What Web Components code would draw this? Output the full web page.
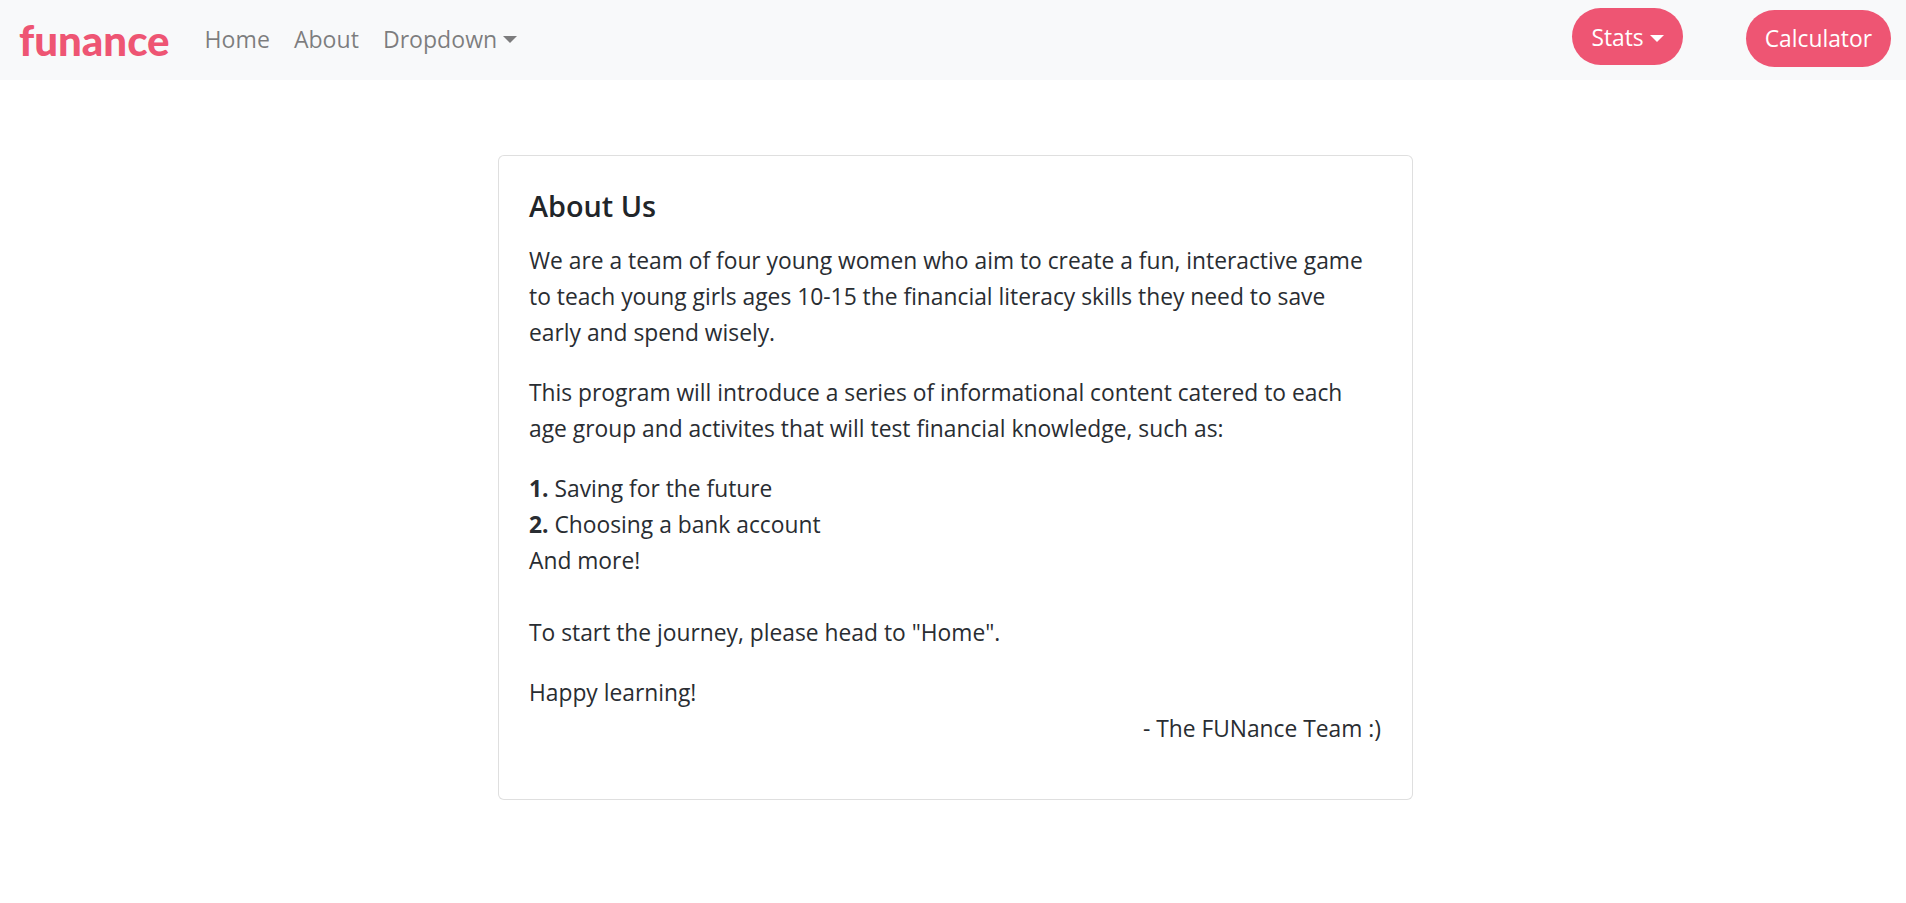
<!DOCTYPE html>
<html lang="en">
<head>
<meta charset="utf-8">
<title>funance</title>
<style>
    html, body { margin: 0; padding: 0; background: #fff; }
    body { font: 22.8px/36px 'Open Sans', 'Noto Sans', sans-serif; color: #292d32; }
</style>
</head>
<body>
<fn-navbar>
    <fn-brand slot="brand">funance</fn-brand>
    <fn-nav-link>Home</fn-nav-link>
    <fn-nav-link>About</fn-nav-link>
    <fn-nav-link caret>Dropdown</fn-nav-link>
    <fn-pill slot="right" caret style="margin-top:8px;padding-top:3px">Stats</fn-pill>
    <fn-pill slot="right" style="margin-top:10px">Calculator</fn-pill>
</fn-navbar>
<fn-card heading="About Us">
    <p>We are a team of four young women who aim to create a fun, interactive game to teach young girls ages 10-15 the financial literacy skills they need to save early and spend wisely.</p>
    <p>This program will introduce a series of informational content catered to each age group and activites that will test financial knowledge, such as:</p>
    <p><b>1.</b> Saving for the future<br><b>2.</b> Choosing a bank account<br>And more!<br><br>To start the journey, please head to "Home".</p>
    <p>Happy learning!</p>
    <p class="sign">- The FUNance Team :)</p>
</fn-card>
<script>
class FnBrand extends HTMLElement {
    constructor() {
        super();
        this.attachShadow({ mode: 'open' });
        this.shadowRoot.innerHTML = `
            <style>
                :host { display: block; font: 900 42px/48px Lato, sans-serif; color: #ee5573; }
            </style>
            <slot></slot>`;
    }
}

class FnNavLink extends HTMLElement {
    constructor() {
        super();
        this.attachShadow({ mode: 'open' });
        this.shadowRoot.innerHTML = `
            <style>
                :host { display: flex; align-items: center; padding: 0 12px; color: rgba(0,0,0,.5); font: 400 23.1px/36px 'Open Sans', sans-serif; }
                .caret { display: none; width: 0; height: 0; margin-left: 6px; border: 7px solid transparent; border-top-color: currentColor; border-bottom: 0; }
                :host([caret]) .caret { display: block; }
            </style>
            <slot></slot><span class="caret"></span>`;
    }
}

class FnPill extends HTMLElement {
    constructor() {
        super();
        this.attachShadow({ mode: 'open' });
        this.shadowRoot.innerHTML = `
            <style>
                :host { display: flex; align-items: center; height: 57px; box-sizing: border-box; padding: 0 19px; border-radius: 28.5px; background: #ee5573; color: #fff; font: 22.8px/36px 'Open Sans', sans-serif; }
                .caret { display: none; width: 0; height: 0; margin-left: 6px; border: 7px solid transparent; border-top-color: currentColor; border-bottom: 0; }
                :host([caret]) .caret { display: block; }
            </style>
            <slot></slot><span class="caret"></span>`;
    }
}

class FnNavbar extends HTMLElement {
    constructor() {
        super();
        this.attachShadow({ mode: 'open' });
        this.shadowRoot.innerHTML = `
            <style>
                :host { display: flex; align-items: center; height: 80px; padding: 0 15px 0 19px; background: #f8f9fa; }
                .links { display: flex; margin: -2px 0 0 23px; flex: 1; }
                .right { display: flex; align-self: flex-start; align-items: flex-start; gap: 63px; }
            </style>
            <slot name="brand"></slot>
            <div class="links"><slot></slot></div>
            <div class="right"><slot name="right"></slot></div>`;
    }
}

class FnCard extends HTMLElement {
    constructor() {
        super();
        this.attachShadow({ mode: 'open' });
        this.shadowRoot.innerHTML = `
            <style>
                :host { display: block; box-sizing: border-box; width: 915px; height: 645px; margin: 75px 0 0 498px; padding: 30px; border: 1px solid rgba(0,0,0,.125); border-radius: 6px; background: #fff; }
                h5 { margin: 0 0 18px; font: 600 28.8px/39px 'Open Sans', sans-serif; color: #212529; }
            </style>
            <h5></h5>
            <slot></slot>`;
        this.shadowRoot.querySelector('h5').textContent = this.getAttribute('heading');
    }
}

customElements.define('fn-brand', FnBrand);
customElements.define('fn-nav-link', FnNavLink);
customElements.define('fn-pill', FnPill);
customElements.define('fn-navbar', FnNavbar);
customElements.define('fn-card', FnCard);
</script>
<style>
    fn-card p { margin: 0 0 24px; max-width: 838px; }
    fn-card p:nth-of-type(4) { margin-bottom: 0; }
    fn-card .sign { text-align: right; margin: 0; max-width: none; padding-right: 1px; }
    fn-card b { font-weight: 700; }
</style>
</body>
</html>
